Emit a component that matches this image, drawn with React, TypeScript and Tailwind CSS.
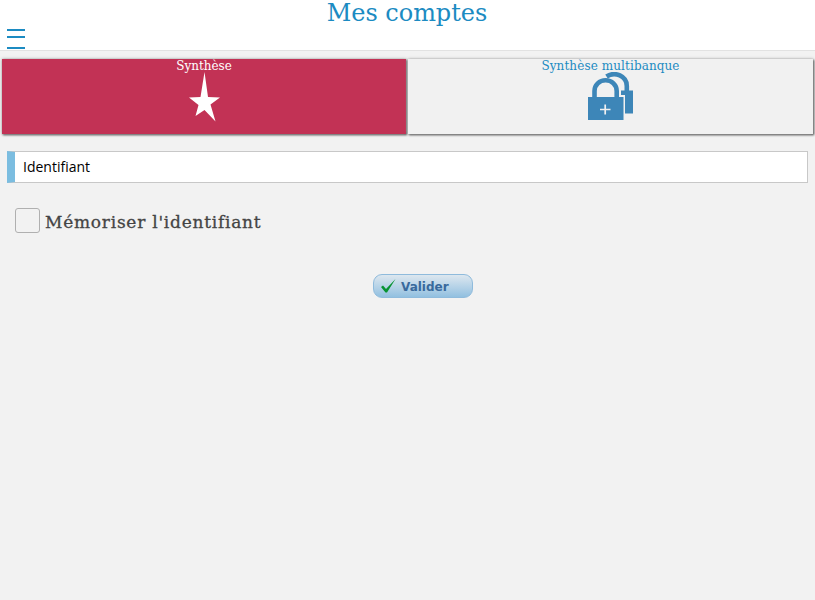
import React from "react";

const cardShadow = "shadow-[0_0_3px_#aaa,1px_1px_2px_#333]";

export default function App() {
  return (
    <div className="flex h-[600px] w-[815px] flex-col overflow-hidden bg-[#f2f2f2] font-['DejaVu_Serif',serif]">
      <header className="h-[51px] shrink-0 border-b border-[#e2e2e2] bg-white text-[#1c8bc2]">
        <h1 className="h-[29px] pr-px text-center text-[24px] leading-[26px] tracking-[-0.05px]">Mes comptes</h1>
        <button className="ml-[7px] block h-5 w-[18px]" aria-label="Menu">
          <span className="block h-0.5 bg-[#1c8bc2]" />
          <span className="mt-[5px] block h-0.5 bg-[#1c8bc2]" />
          <span className="mt-[9px] block h-0.5 bg-[#1c8bc2]" />
        </button>
      </header>

      <nav className="mt-2 flex h-[75px] shrink-0 gap-[2px] pr-[2px] pl-[2px] text-[12px]">
        <a className={`flex w-[404px] flex-col items-center bg-[#c23255] text-white ${cardShadow}`}>
          <span className="h-[13px] leading-[14px]">Synthèse</span>
          <svg className="h-[50px] w-[32px]" viewBox="0 0 32 50" fill="#fff">
            <path d="M16.500 0 L20 25 L32 25.500 L22.500 32.500 L27.500 49.500 L16.500 38 L7.500 44 L10.500 33 L1 25.500 L12.500 25 Z" />
          </svg>
        </a>
        <a className={`flex flex-1 flex-col items-center bg-[#f1f1f1] text-[#1c8bc2] ${cardShadow}`}>
          <span className="h-[13px] leading-[14px] tracking-[0.1px]">Synthèse multibanque</span>
          <svg className="h-[49px] w-[46px]" viewBox="0 0 46 49" fill="none">
            <path d="M18.500 4.500 C27 -1 38.800 4 38.800 14 V20" stroke="#3d86b8" strokeWidth="4.600" />
            <path d="M33 18.500 H45 V41.500 H37 V23 H33 Z" fill="#3d86b8" />
            <path d="M6.500 26 V19 A11.100 10.700 0 0 1 28.700 19 V26" stroke="#3d86b8" strokeWidth="4.600" />
            <path d="M0 25 H35.500 V48 H0 Z" fill="#3d86b8" />
            <path d="M12 37.500 H22.500 M17.200 32.500 V42.500" stroke="#f1f1f1" strokeWidth="1.700" />
          </svg>
        </a>
      </nav>

      <main className="pt-[17px]">
        <input
          className="ml-[7px] block h-8 w-[801px] border border-l-8 border-[#c8c8c8] border-l-[#7bbde0] bg-white pb-[2px] pl-2 font-['Open_Sans',sans-serif] text-[14px] text-black placeholder:text-black placeholder:opacity-100"
          placeholder="Identifiant"
        />
        <label className="mt-[25px] ml-[15px] flex h-[25px] items-center gap-[5px] text-[17px] text-[#444]">
          <span className="h-[25px] w-[25px] rounded-[3px] border border-[#b0b0b0]" />
          <span className="pt-1 leading-[25px] tracking-[0.75px] [-webkit-text-stroke:0.3px_#444]">Mémoriser l'identifiant</span>
        </label>
        <button className="mt-[41px] ml-[373px] flex h-6 w-[100px] items-center rounded-[9px] border border-[#8fbbdc] bg-linear-to-b from-[#dde7ef] to-[#92c0e0] pl-[7px] font-['DejaVu_Sans',sans-serif] text-[12px] font-bold text-[#38699c]">
          <svg className="mr-[5px] h-[14px] w-[15px]" viewBox="0 0 15 14" fill="#079332">
            <path d="M0 8 L2 6.500 L5 10 L14.500 0 L6 13.500 H4.500 Z" />
          </svg>
          <span className="pt-px">Valider</span>
        </button>
      </main>
    </div>
  );
}
